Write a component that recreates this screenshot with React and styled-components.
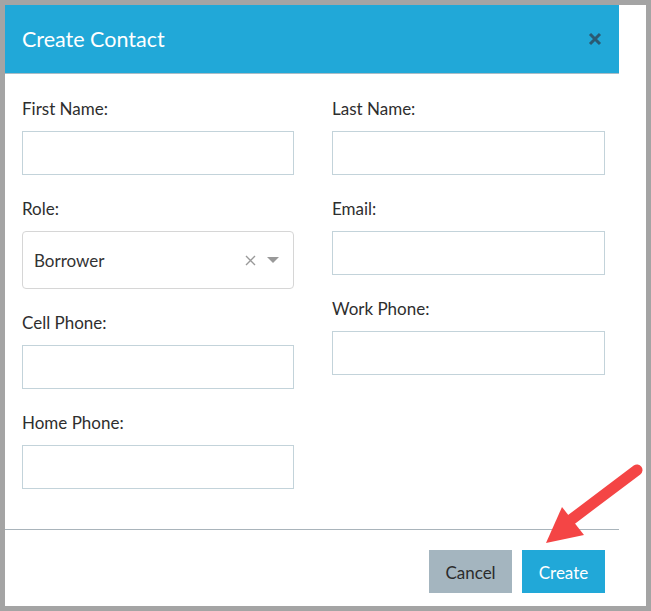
import { styled, createGlobalStyle } from "styled-components";

const GlobalStyle = createGlobalStyle`
  body {
    margin: 0;
    font-family: Lato, "Open Sans", sans-serif;
  }
  * {
    box-sizing: border-box;
  }
`;

const Frame = styled.div`
  position: relative;
  width: 651px;
  height: 611px;
  border: 5px solid #a4a4a4;
  background: #fff;
`;

const Dialog = styled.div`
  width: 614px;
  display: flex;
  flex-direction: column;
`;

const Header = styled.div`
  height: 69px;
  background: #21a8d8;
  border-bottom: 1px solid #a9bcc6;
  display: flex;
  align-items: center;
  justify-content: space-between;
  padding: 0 17px 0 17px;
`;

const Title = styled.h2`
  margin: 0;
  color: #fff;
  font-size: 21.5px;
  font-weight: 400;
`;

const CloseBtn = styled.button`
  border: none;
  background: none;
  padding: 0;
  width: 14px;
  height: 14px;
  display: flex;
  cursor: pointer;
`;

const Body = styled.div`
  display: grid;
  grid-template-columns: 272px 273px;
  column-gap: 38px;
  padding: 23px 14px 18px 17px;
`;

const Column = styled.div`
  display: flex;
  flex-direction: column;
`;

const Field = styled.div`
  display: flex;
  flex-direction: column;
  margin-bottom: 22px;
`;

const Label = styled.label`
  font-size: 17px;
  line-height: 23px;
  color: #2e2e2e;
  margin-bottom: 11px;
`;

const Input = styled.input`
  height: 44px;
  border: 1px solid #c3d3da;
  border-radius: 0;
  outline: none;
  padding: 0 11px;
  font-family: inherit;
  font-size: 17px;
`;

const Select = styled.div`
  height: 58px;
  border: 1px solid #d6d6d6;
  border-radius: 4px;
  display: flex;
  align-items: center;
  padding: 0 14px 0 11px;
  font-size: 17px;
  color: #333;
`;

const SelectValue = styled.span`
  flex: 1;
`;

const SelectClear = styled.span`
  display: flex;
  margin-right: 11px;
`;

const Caret = styled.span`
  width: 0;
  height: 0;
  border-left: 6px solid transparent;
  border-right: 6px solid transparent;
  border-top: 6px solid #999;
`;

const Footer = styled.div`
  border-top: 1px solid #a9b4bb;
  display: flex;
  justify-content: flex-end;
  gap: 10px;
  padding: 20px 14px 13px 0;
`;

const Button = styled.button`
  width: 83px;
  height: 43px;
  border: none;
  padding: 2px 0 0;
  font-family: inherit;
  font-size: 17px;
  cursor: pointer;
  background: ${(p) => (p.primary ? "#21a8d8" : "#a4b5bf")};
  color: ${(p) => (p.primary ? "#fff" : "#2b2b2b")};
`;

const Overlay = styled.svg`
  position: absolute;
  left: -5px;
  top: -5px;
  pointer-events: none;
`;

export default function App() {
  return (
    <>
      <GlobalStyle />
      <Frame>
        <Dialog>
          <Header>
            <Title>Create Contact</Title>
            <CloseBtn aria-label="Close">
              <svg width="14" height="14" viewBox="0 0 14 14">
                <path d="M2 2 L12 12 M12 2 L2 12" stroke="#2b5a72" strokeWidth="3" />
              </svg>
            </CloseBtn>
          </Header>
          <Body>
            <Column>
              <Field>
                <Label>First Name:</Label>
                <Input />
              </Field>
              <Field>
                <Label>Role:</Label>
                <Select>
                  <SelectValue>Borrower</SelectValue>
                  <SelectClear>
                    <svg width="11" height="11" viewBox="0 0 11 11">
                      <path d="M1 1 L10 10 M10 1 L1 10" stroke="#999" strokeWidth="1.4" />
                    </svg>
                  </SelectClear>
                  <Caret />
                </Select>
              </Field>
              <Field>
                <Label>Cell Phone:</Label>
                <Input />
              </Field>
              <Field>
                <Label>Home Phone:</Label>
                <Input />
              </Field>
            </Column>
            <Column>
              <Field>
                <Label>Last Name:</Label>
                <Input />
              </Field>
              <Field>
                <Label>Email:</Label>
                <Input />
              </Field>
              <Field>
                <Label>Work Phone:</Label>
                <Input />
              </Field>
            </Column>
          </Body>
          <Footer>
            <Button>Cancel</Button>
            <Button primary>Create</Button>
          </Footer>
        </Dialog>
        <Overlay width="651" height="611">
          <line x1="637" y1="470" x2="568" y2="522" stroke="#f44545" strokeWidth="11" strokeLinecap="round" />
          <polygon points="546,543 562,507 584,535" fill="#f44545" />
        </Overlay>
      </Frame>
    </>
  );
}
